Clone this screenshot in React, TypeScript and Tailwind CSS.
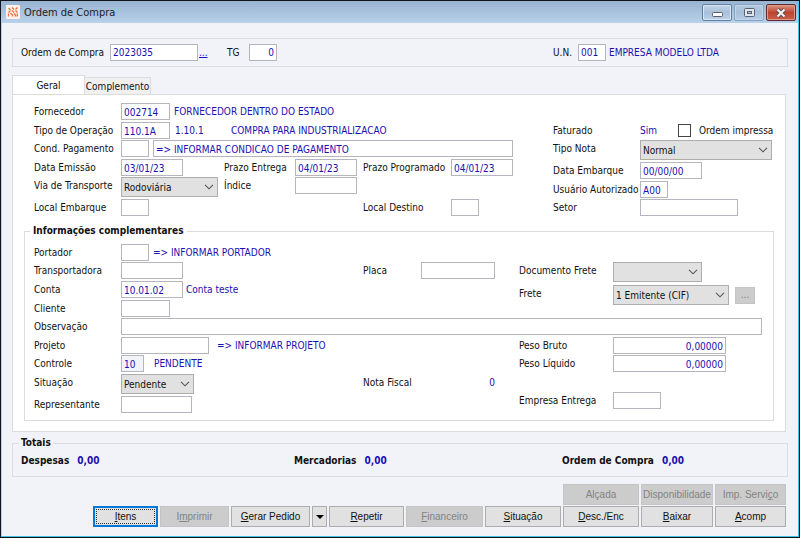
import type { ReactNode } from "react";

const UI = "font-['DejaVu_Sans_Condensed','DejaVu_Sans',sans-serif]";

function Label({ children, htmlFor, className = "" }: { children: ReactNode; htmlFor: string; className?: string }) {
  return (
    <label htmlFor={htmlFor} className={`whitespace-nowrap leading-[17px] ${className}`}>
      {children}
    </label>
  );
}

function Field({ id, value = "", className = "", label }: { id: string; value?: string; className?: string; label?: string }) {
  return (
    <input
      id={id}
      aria-label={label}
      defaultValue={value}
      className={`h-[17px] min-w-0 shrink-0 border border-[#b4b5bd] bg-white px-[2px] pt-px text-[#1a0fb0] outline-none ${className}`}
    />
  );
}

function Select({ id, options, className = "" }: { id: string; options: string[]; className?: string }) {
  return (
    <div className={`relative h-5 shrink-0 ${className}`}>
      <select id={id} className="h-full w-full appearance-none border border-[#adadad] bg-[#e1e1e1] pl-[2px] text-[#111] outline-none">
        {options.map((o) => (
          <option key={o}>{o}</option>
        ))}
      </select>
      <svg viewBox="0 0 10 6" className="pointer-events-none absolute right-1 top-[7px] h-[6px] w-[10px]" fill="none" stroke="#555" strokeWidth="1.1">
        <path d="M1 .8 5 4.8 9 .8" />
      </svg>
    </div>
  );
}

function Info({ children, className = "" }: { children: ReactNode; className?: string }) {
  return <span className={`whitespace-nowrap leading-[17px] text-[#1a0fb0] ${className}`}>{children}</span>;
}

function Btn({ children, disabled = false, focused = false, className = "" }: { children: ReactNode; disabled?: boolean; focused?: boolean; className?: string }) {
  const edge = focused
    ? "border-2 border-[#0078d7] outline-1 -outline-offset-4 outline-dotted outline-[#333]"
    : "border border-[#adadad] disabled:border-[#c4c4c4]";
  return (
    <button
      disabled={disabled}
      className={`flex h-[21px] items-center justify-center whitespace-nowrap bg-[#e1e1e1] text-[#111] disabled:bg-[#cccccc] disabled:text-[#838383] ${edge} ${className}`}
    >
      {children}
    </button>
  );
}

function TitleBar() {
  return (
    <header className="flex h-[22px] items-start bg-linear-to-b from-[#98b4d1] to-[#b9d1ea] pl-[5px] pr-[2px]">
      <svg viewBox="0 0 14 14" className="mt-1 h-[14px] w-[14px]">
        <rect width="14" height="14" rx="1" fill="#fdf3ec" />
        <g stroke="#f0703a" strokeWidth="1.3" fill="none">
          <path d="M2.500 3 4.500 5M6 2.500 8 4.500M9.500 4.500 11.500 2.500M2.500 7.500 4.500 5.500M6 5.500 8 7.500M9.500 5.500 11.500 7.500M2.500 8.500V11.500M4.500 8 6.500 10V11.500M8 8.500 9.500 10V11.500M11.300 8.500V11.500" />
        </g>
      </svg>
      <h1 className="ml-1 mt-1 flex-1 text-[11px] leading-[15px] text-[#1c1c1c]">Ordem de Compra</h1>
      <div className="mt-[3px] flex gap-[2px]">
        <button aria-label="Minimizar" className="flex h-[17px] w-[30px] items-center justify-center rounded-[2px] border border-[#64809f] bg-linear-to-b from-[#c3d5e9] via-[#a8c0da] to-[#bcd2ea] shadow-[inset_0_0_0_1px_#d8e5f3]">
          <svg viewBox="0 0 11 5" className="mt-1 h-[5px] w-[11px]">
            <rect x=".5" y=".5" width="10" height="4" rx="1" fill="#fff" stroke="#5a5f6b" />
          </svg>
        </button>
        <button aria-label="Maximizar" className="flex h-[17px] w-[30px] items-center justify-center rounded-[2px] border border-[#86a3c3] bg-linear-to-b from-[#b4cae2] via-[#a6bfda] to-[#b6cde7] shadow-[inset_0_0_0_1px_#c2d5e9]">
          <svg viewBox="0 0 11 9" className="h-[9px] w-[11px]">
            <rect x=".5" y=".5" width="10" height="8" rx="1" fill="#dfe6ee" stroke="#5a6170" />
            <rect x="3.500" y="3.500" width="4" height="2" fill="#a9bfd8" stroke="#5a6170" />
          </svg>
        </button>
        <button aria-label="Fechar" className="flex h-[17px] w-[30px] items-center justify-center rounded-[2px] border border-[#5e2a2a] bg-linear-to-b from-[#dc9484] via-[#bd4530] to-[#c9604a] shadow-[inset_0_0_0_1px_#dd9a8c]">
          <svg viewBox="0 0 12 10" className="h-[10px] w-[12px]">
            <path d="M2.500 1.500 9.500 8.500M9.500 1.500 2.500 8.500" stroke="#5c4a50" strokeWidth="4" />
            <path d="M2.500 1.500 9.500 8.500M9.500 1.500 2.500 8.500" stroke="#f4f4f4" strokeWidth="2.200" />
          </svg>
        </button>
      </div>
    </header>
  );
}

function Geral() {
  return (
    <div className="flex pl-[10px]">
      <div className="grid grid-cols-[87px_103px_71px_68px_88px_62px] grid-rows-[19px_18px_19px_18px_22px_17px] items-start">
        <Label htmlFor="forn">Fornecedor</Label>
        <div className="col-span-5 flex h-[17px]">
          <Field id="forn" value="002714" className="w-[49px]" />
          <Info className="ml-[4px]">FORNECEDOR DENTRO DO ESTADO</Info>
        </div>

        <Label htmlFor="oper">Tipo de Operação</Label>
        <div className="col-span-5 flex h-[17px]">
          <Field id="oper" value="110.1A" className="w-[49px]" />
          <Info className="ml-[5px] w-[56px]">1.10.1</Info>
          <Info>COMPRA PARA INDUSTRIALIZACAO</Info>
        </div>

        <Label htmlFor="cond">Cond. Pagamento</Label>
        <div className="col-span-5 flex h-[17px] gap-1">
          <Field id="cond" className="w-7" />
          <Field id="condDesc" label="Descrição da condição" value="=> INFORMAR CONDICAO DE PAGAMENTO" className="flex-1" />
        </div>

        <Label htmlFor="emis">Data Emissão</Label>
        <Field id="emis" value="03/01/23" className="w-[62px]" />
        <Label htmlFor="entr">Prazo Entrega</Label>
        <Field id="entr" value="04/01/23" className="w-[62px]" />
        <Label htmlFor="prog">Prazo Programado</Label>
        <Field id="prog" value="04/01/23" className="w-[62px]" />

        <Label htmlFor="via">Via de Transporte</Label>
        <Select id="via" options={["Rodoviária", "Ferroviária", "Aérea"]} className="w-[97px]" />
        <Label htmlFor="ind">Índice</Label>
        <Field id="ind" className="col-span-3 w-[62px]" />

        <Label htmlFor="emb">Local Embarque</Label>
        <Field id="emb" className="col-span-3 w-7" />
        <Label htmlFor="dest">Local Destino</Label>
        <Field id="dest" className="w-7" />
      </div>

      <div className="ml-10 grid grid-cols-[87px_132px] grid-rows-[18px_22px_19px_18px_17px] items-start pt-[19px]">
        <span className="leading-[17px]">Faturado</span>
        <div className="flex items-center">
          <Info className="w-[38px] shrink-0">Sim</Info>
          <input id="impressa" type="checkbox" className="size-[13px] shrink-0 appearance-none border border-[#444] bg-white" />
          <Label htmlFor="impressa" className="ml-2">Ordem impressa</Label>
        </div>
        <Label htmlFor="nota">Tipo Nota</Label>
        <Select id="nota" options={["Normal", "Complementar"]} />
        <Label htmlFor="demb">Data Embarque</Label>
        <Field id="demb" value="00/00/00" className="w-[62px]" />
        <Label htmlFor="usu">Usuário Autorizado</Label>
        <Field id="usu" value="A00" className="w-7" />
        <Label htmlFor="setor">Setor</Label>
        <Field id="setor" className="w-[98px]" />
      </div>
    </div>
  );
}

function Complementares() {
  return (
    <fieldset className="mt-[9px] border border-[#dcdcdc] pb-[7px] pl-[9px] pr-[11px]">
      <legend className="-ml-1 px-[3px] text-[10px] font-bold leading-[12px]">Informações complementares</legend>
      <div className="mt-[7px] grid grid-cols-[87px_242px_58px_98px_94px_1fr] grid-rows-[18px_19px_19px_18px_19px_18px_19px_22px_17px] items-start">
        <Label htmlFor="port" className="col-start-1 row-start-1">Portador</Label>
        <div className="col-start-2 row-start-1 flex">
          <Field id="port" className="w-7" />
          <Info className="ml-1">=&gt; INFORMAR PORTADOR</Info>
        </div>

        <Label htmlFor="transp" className="col-start-1 row-start-2">Transportadora</Label>
        <Field id="transp" className="col-start-2 row-start-2 w-[62px]" />
        <Label htmlFor="placa" className="col-start-3 row-start-2">Placa</Label>
        <Field id="placa" className="col-start-4 row-start-2 w-[74px]" />

        <Label htmlFor="conta" className="col-start-1 row-start-3">Conta</Label>
        <div className="col-start-2 row-start-3 flex">
          <Field id="conta" value="10.01.02" className="w-[62px]" />
          <Info className="ml-[3px]">Conta teste</Info>
        </div>

        <div className="col-span-2 col-start-5 row-span-3 row-start-2 grid grid-cols-[94px_1fr] gap-y-[3px]">
          <Label htmlFor="dfrete">Documento Frete</Label>
          <Select id="dfrete" options={["", "CT-e"]} className="w-[89px]" />
          <Label htmlFor="frete">Frete</Label>
          <div className="flex items-center gap-[6px]">
            <Select id="frete" options={["1 Emitente (CIF)", "2 Destinatário (FOB)"]} className="w-[116px]" />
            <button disabled aria-label="Selecionar frete" className="h-[17px] w-5 border border-[#c4c4c4] bg-[#cccccc] leading-[12px] text-[#838383]">
              ...
            </button>
          </div>
        </div>

        <Label htmlFor="cli" className="col-start-1 row-start-4">Cliente</Label>
        <Field id="cli" className="col-start-2 row-start-4 w-[49px]" />

        <Label htmlFor="obs" className="col-start-1 row-start-5">Observação</Label>
        <Field id="obs" className="col-span-5 col-start-2 row-start-5" />

        <Label htmlFor="proj" className="col-start-1 row-start-6">Projeto</Label>
        <div className="col-start-2 row-start-6 flex">
          <Field id="proj" className="w-[88px]" />
          <Info className="ml-2">=&gt; INFORMAR PROJETO</Info>
        </div>
        <Label htmlFor="bruto" className="col-start-5 row-start-6">Peso Bruto</Label>
        <Field id="bruto" value="0,00000" className="col-start-6 row-start-6 w-[113px] text-right" />

        <Label htmlFor="ctrl" className="col-start-1 row-start-7">Controle</Label>
        <div className="col-start-2 row-start-7 flex">
          <input id="ctrl" readOnly defaultValue="10" className="h-[17px] w-[23px] border border-[#b4b5bd] bg-[#f2f3f9] px-[2px] pt-px text-[#1a0fb0] outline-none" />
          <Info className="ml-[10px]">PENDENTE</Info>
        </div>
        <Label htmlFor="liq" className="col-start-5 row-start-7">Peso Líquido</Label>
        <Field id="liq" value="0,00000" className="col-start-6 row-start-7 w-[113px] text-right" />

        <Label htmlFor="sit" className="col-start-1 row-start-8">Situação</Label>
        <Select id="sit" options={["Pendente", "Encerrado"]} className="col-start-2 row-start-8 w-[73px]" />
        <span className="col-start-3 row-start-8 whitespace-nowrap leading-[17px]">Nota Fiscal</span>
        <Info className="col-start-4 row-start-8 w-[74px] text-right">0</Info>

        <Label htmlFor="rep" className="col-start-1 row-start-9">Representante</Label>
        <Field id="rep" className="col-start-2 row-start-9 w-[71px]" />

        <div className="col-span-2 col-start-5 row-span-2 row-start-8 grid grid-cols-[94px_1fr] self-end pb-1">
          <Label htmlFor="eent">Empresa Entrega</Label>
          <Field id="eent" className="w-[48px]" />
        </div>
      </div>
    </fieldset>
  );
}

export default function App() {
  return (
    <div className={`flex min-h-screen flex-col border border-[#10141a] bg-[#f2f3f9] text-[10px] leading-[13px] text-[#111] ${UI}`}>
      <div className="flex flex-1 flex-col border-b border-r border-[#3fc6e6]">
        <TitleBar />
        <main className="flex flex-1 flex-col border-l border-[#c3d0e2] px-[10px] pt-[15px]">
          <section className="flex h-[29px] items-center border border-[#dcdce2] pb-px pl-2">
            <Label htmlFor="ordem" className="w-[89px]">Ordem de Compra</Label>
            <Field id="ordem" value="2023035" className="w-[88px]" />
            <a href="#buscar" className="ml-[1px] w-[28px] text-[#1a0fd0] underline">...</a>
            <Label htmlFor="tg" className="w-[22px]">TG</Label>
            <Field id="tg" value="0" className="w-7 text-right" />
            <div className="ml-auto flex w-[234px] items-center">
              <Label htmlFor="un" className="w-[25px]">U.N.</Label>
              <Field id="un" value="001" className="w-7" />
              <Info className="ml-[3px]">EMPRESA MODELO LTDA</Info>
            </div>
          </section>

          <div role="tablist" className="mt-2 flex items-end">
            <button role="tab" aria-selected="true" className="-mb-px h-5 w-[73px] border border-b-0 border-[#dcdcdc] bg-white">Geral</button>
            <button role="tab" aria-selected="false" className="h-[17px] w-[66px] whitespace-nowrap border border-b-0 border-l-0 border-[#dcdcdc] bg-[#f0f0f0]">Complemento</button>
          </div>
          <section className="mr-[2px] border border-[#dcdcdc] bg-white px-[11px] pb-[10px] pt-2">
            <Geral />
            <Complementares />
          </section>

          <fieldset className="mt-[5px] border border-[#dcdce2] px-2 pb-[9px] font-bold">
            <legend className="-ml-[2px] px-[2px] leading-[12px]">Totais</legend>
            <dl className="grid grid-cols-[273px_268px_1fr] pt-[5px]">
              <div className="flex gap-2"><dt>Despesas</dt><dd className="text-[#1a0fb0]">0,00</dd></div>
              <div className="flex gap-2"><dt>Mercadorias</dt><dd className="text-[#1a0fb0]">0,00</dd></div>
              <div className="flex gap-2"><dt>Ordem de Compra</dt><dd className="text-[#1a0fb0]">0,00</dd></div>
            </dl>
          </fieldset>

          <div className="mr-[2px] mt-[7px] grid grid-cols-[65px_69px_79px_15px_75px_77px_76px_76px_72px_71px] justify-end gap-x-[2px] gap-y-[1px] font-['Liberation_Sans',Arial,sans-serif]">
            <Btn disabled className="col-start-8">Alçada</Btn>
            <Btn disabled>Disponibilidade</Btn>
            <Btn disabled><span>Imp. Servi<u>ç</u>o</span></Btn>
            <Btn focused><span><u>I</u>tens</span></Btn>
            <Btn disabled><span>I<u>m</u>primir</span></Btn>
            <Btn><span><u>G</u>erar Pedido</span></Btn>
            <Btn>
              <svg viewBox="0 0 8 4" className="h-1 w-2 shrink-0" aria-label="Mais opções"><path d="M0 0H8L4 4Z" fill="#000" /></svg>
            </Btn>
            <Btn><span><u>R</u>epetir</span></Btn>
            <Btn disabled><span><u>F</u>inanceiro</span></Btn>
            <Btn><span><u>S</u>ituação</span></Btn>
            <Btn><span><u>D</u>esc./Enc</span></Btn>
            <Btn><span><u>B</u>aixar</span></Btn>
            <Btn><span><u>A</u>comp</span></Btn>
          </div>
        </main>
      </div>
    </div>
  );
}
